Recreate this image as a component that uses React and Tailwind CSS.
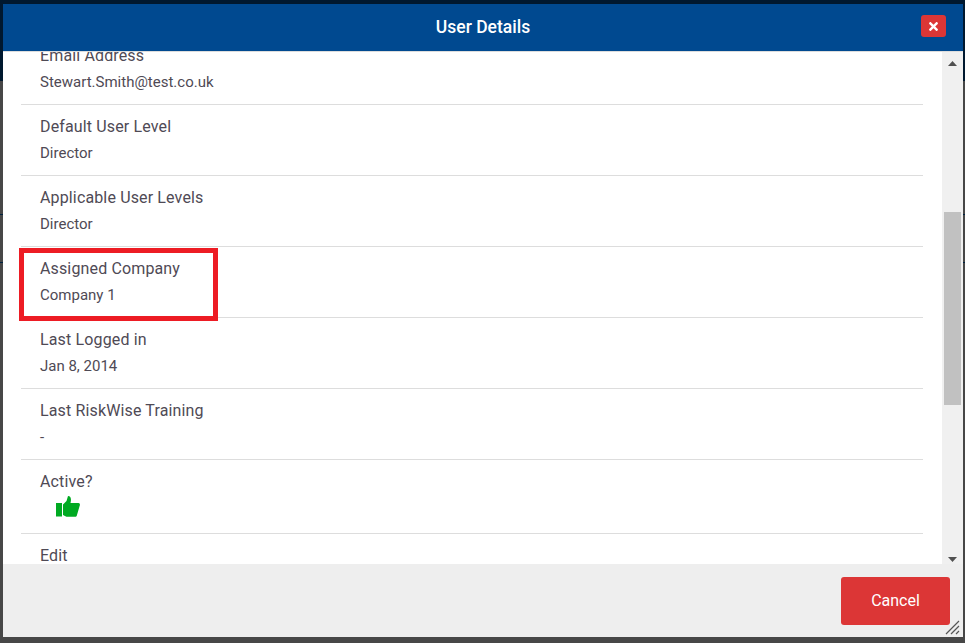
import { FaTimes } from "react-icons/fa";

const rows = [
  { label: "Email Address", value: "Stewart.Smith@test.co.uk" },
  { label: "Default User Level", value: "Director" },
  { label: "Applicable User Levels", value: "Director" },
  { label: "Assigned Company", value: "Company 1", marked: true },
  { label: "Last Logged in", value: "Jan 8, 2014" },
  { label: "Last RiskWise Training", value: "-" },
];

const DetailRow = ({ label, value, marked }) => (
  <div className="relative border-b border-[#dddddd] pl-[19px] pt-[10px] h-[71px]">
    <div className="text-[16px] leading-[24px] tracking-[0.14px] text-[#4f4a55]">{label}</div>
    <div className="mt-[3px] text-[15px] leading-[22px] text-[#4f4a55]">{value}</div>
    {/* red annotation box on the screenshot */}
    {marked && (
      <div className="absolute left-[-2px] top-[1px] w-[199px] h-[73px] border-[5px] border-[#ed1c24]"></div>
    )}
  </div>
);

const ThumbIcon = () => (
  <svg width="24" height="21" viewBox="0 0 24 21" className="ml-[16px] mt-[2px] fill-[#00aa22]">
    <rect x="0" y="7" width="6" height="13.5" />
    <path d="M7 8.5 L10.5 5 L12 0 C15 0 15.5 3 14.5 7 H22.5 C24 7 24.2 8.8 23.6 10 L21 19 C20.6 20.5 20 20.7 19 20.7 H10.5 L7 19 Z" />
  </svg>
);

const App = () => {
  return (
    <div className="relative w-[965px] h-[643px] overflow-hidden bg-[#474747] font-['Roboto',sans-serif]">
      {/* page behind the modal */}
      <div className="h-[81px] bg-[#00182f]"></div>
      <div className="mt-[133px] h-px bg-[#00223f]"></div>
      <div className="mt-[47px] h-px bg-[#00223f]"></div>

      <div className="absolute left-[3px] top-[4px] w-[960px] h-[633px] flex flex-col bg-white">
        <header className="relative flex items-center justify-center h-[48px] shrink-0 bg-[#004990] border-b border-[#dddddd]">
          <h1 className="text-[17.5px] font-medium text-white">User Details</h1>
          <button className="absolute right-[17px] top-[11px] flex items-center justify-center w-[25px] h-[22px] rounded-[3px] bg-[#dc3636] text-white">
            <FaTimes className="text-[13px]" />
          </button>
        </header>

        <div className="flex flex-1 min-h-0">
          <div className="flex-1 overflow-hidden pl-[18px] pr-[19px]">
            <div className="-mt-[18px]">
              {rows.map((row) => (
                <DetailRow key={row.label} {...row} />
              ))}
              <div className="border-b border-[#dddddd] pl-[19px] pt-[10px] h-[74px]">
                <div className="text-[16px] leading-[24px] tracking-[0.14px] text-[#4f4a55]">Active?</div>
                <ThumbIcon />
              </div>
              <div className="pl-[19px] pt-[10px]">
                <div className="text-[16px] leading-[24px] tracking-[0.14px] text-[#4f4a55]">Edit</div>
              </div>
            </div>
          </div>

          <div className="flex flex-col items-center w-[21px] shrink-0 bg-[#f0f0f0]">
            <svg width="9" height="5" viewBox="0 0 9 5" className="mt-[9px] fill-[#505050]">
              <polygon points="4.5,0 9,5 0,5" />
            </svg>
            <div className="mt-[146px] w-[17px] h-[193px] bg-[#c1c1c1]"></div>
            <svg width="9" height="5" viewBox="0 0 9 5" className="mt-auto mb-[2px] fill-[#505050]">
              <polygon points="0,0 9,0 4.5,5" />
            </svg>
          </div>
        </div>

        <footer className="relative flex justify-end items-start h-[73px] shrink-0 bg-[#eeeeee] pt-[13px] pr-[13px]">
          <button className="w-[109px] h-[48px] rounded-[3px] bg-[#dc3636] text-[16px] text-white">Cancel</button>
          <svg width="15" height="15" viewBox="0 0 15 15" className="absolute right-[3px] bottom-[2px] stroke-[#555555]">
            <path d="M1 14 L14 1 M6 14 L14 6 M11 14 L14 11" fill="none" strokeWidth="1.2" />
          </svg>
        </footer>
      </div>
    </div>
  );
};

export default App;
